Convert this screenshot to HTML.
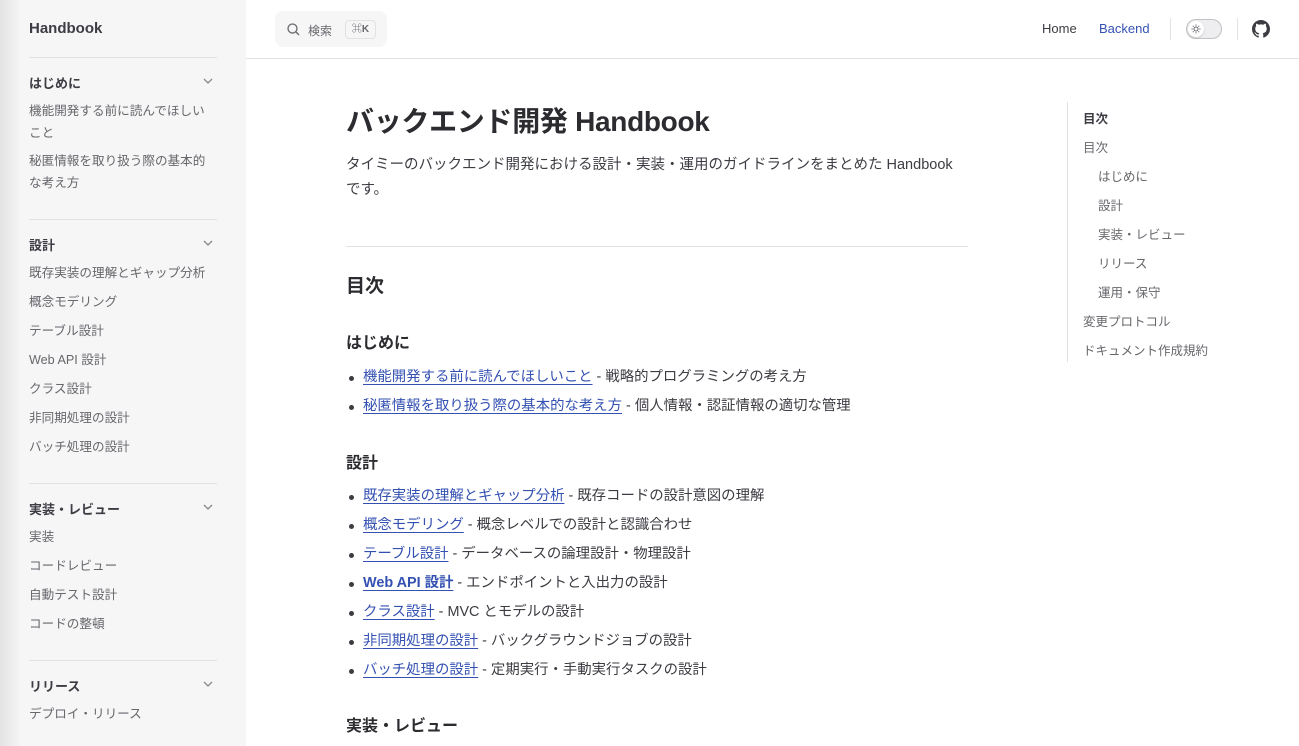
<!DOCTYPE html>
<html><head><meta charset="utf-8"><style>
*{margin:0;padding:0;box-sizing:border-box}
body{width:1299px;height:746px;overflow:hidden;background:#fff;font-family:"Liberation Sans","Noto Sans CJK JP",sans-serif;color:#3c3c43;position:relative}
.side{position:absolute;left:0;top:0;width:246px;height:746px;background:#f6f6f7}
.side:before{content:"";position:absolute;left:0;top:0;width:22px;height:100%;background:linear-gradient(90deg,rgba(0,0,0,.08),rgba(0,0,0,0))}
.logo{position:absolute;left:29px;top:20px;font-size:15px;font-weight:bold;color:#3c3c43}
.sline{position:absolute;left:29px;width:188px;height:1px;background:#e2e2e3}
.sh{position:absolute;left:29px;font-size:13px;font-weight:bold;color:#3c3c43}
.chev{position:absolute;left:202px;width:12px;height:12px}
.si{position:absolute;left:29px;font-size:12.6px;color:#67676c;line-height:22px;width:186px}
.hline{position:absolute;left:246px;right:0;top:58px;height:1px;background:#e2e2e3}
.search{position:absolute;left:275px;top:11px;width:112px;height:36px;background:#f6f6f7;border-radius:8px}
.search span{position:absolute;left:33px;top:11px;font-size:12px;color:#67676c}
.kbd{position:absolute;left:70px;top:9px;width:31px;height:19px;border:1px solid #e2e2e3;border-radius:4px;font-size:10px;color:#67676c;text-align:center;line-height:17px;font-weight:bold}
.nav{position:absolute;top:21px;font-size:13px}
.vsep{position:absolute;top:18px;width:1px;height:22px;background:#e2e2e3}
.main{position:absolute;left:346px;top:0;width:622px}
h1{position:absolute;top:100px;font-size:28px;font-weight:bold;color:#2c2c30;white-space:nowrap;letter-spacing:-.3px}
.p{position:absolute;top:153px;font-size:14.5px;line-height:25px;width:622px}
.hr{position:absolute;top:246px;width:622px;height:1px;background:#e2e2e3}
h2{position:absolute;font-size:19px;font-weight:bold;color:#2c2c30}
h3{position:absolute;font-size:16px;font-weight:bold;color:#2c2c30}
ul{position:absolute;list-style:none;font-size:14.4px;line-height:29px}
li{position:relative;padding-left:17px;white-space:nowrap}
li:before{content:"";position:absolute;left:3px;top:13px;width:5px;height:5px;border-radius:50%;background:#3c3c43}
a{color:#3451b2;text-decoration:underline;text-underline-offset:3px}
.toc{position:absolute;left:1067px;top:102px;border-left:1px solid #e2e2e3;height:260px}
.toc div{position:absolute;white-space:nowrap;font-size:12.5px;color:#67676c}
</style></head><body>
<div class="side">
<div class="logo">Handbook</div>
<div class="sline" style="top:57px"></div>
<div class="sh" style="top:73px">はじめに</div>
<svg class="chev" style="top:75px" viewBox="0 0 12 12"><path d="M2 4l4 4 4-4" fill="none" stroke="#888" stroke-width="1.3"/></svg>
<div class="si" style="top:100px">機能開発する前に読んでほしいこと</div>
<div class="si" style="top:150px">秘匿情報を取り扱う際の基本的な考え方</div>
<div class="sline" style="top:219px"></div>
<div class="sh" style="top:235px">設計</div>
<svg class="chev" style="top:237px" viewBox="0 0 12 12"><path d="M2 4l4 4 4-4" fill="none" stroke="#888" stroke-width="1.3"/></svg>
<div class="si" style="top:262px">既存実装の理解とギャップ分析</div>
<div class="si" style="top:291px">概念モデリング</div>
<div class="si" style="top:320px">テーブル設計</div>
<div class="si" style="top:349px">Web API 設計</div>
<div class="si" style="top:378px">クラス設計</div>
<div class="si" style="top:407px">非同期処理の設計</div>
<div class="si" style="top:436px">バッチ処理の設計</div>
<div class="sline" style="top:483px"></div>
<div class="sh" style="top:499px">実装・レビュー</div>
<svg class="chev" style="top:501px" viewBox="0 0 12 12"><path d="M2 4l4 4 4-4" fill="none" stroke="#888" stroke-width="1.3"/></svg>
<div class="si" style="top:526px">実装</div>
<div class="si" style="top:555px">コードレビュー</div>
<div class="si" style="top:584px">自動テスト設計</div>
<div class="si" style="top:613px">コードの整頓</div>
<div class="sline" style="top:660px"></div>
<div class="sh" style="top:676px">リリース</div>
<svg class="chev" style="top:678px" viewBox="0 0 12 12"><path d="M2 4l4 4 4-4" fill="none" stroke="#888" stroke-width="1.3"/></svg>
<div class="si" style="top:703px">デプロイ・リリース</div>
</div>
<div class="hline"></div>
<div class="search"><svg style="position:absolute;left:12px;top:12px" width="13" height="13" viewBox="0 0 13 13"><circle cx="5.5" cy="5.5" r="4.5" fill="none" stroke="#67676c" stroke-width="1.3"/><path d="M9 9l3 3" stroke="#67676c" stroke-width="1.3"/></svg><span>検索</span><div class="kbd">⌘K</div></div>
<div class="nav" style="left:1042px;color:#3c3c43">Home</div>
<div class="nav" style="left:1099px;color:#3451b2">Backend</div>
<div class="vsep" style="left:1170px"></div>
<div style="position:absolute;left:1186px;top:19px;width:36px;height:20px;border:1px solid #c2c2c4;border-radius:10px;background:#eeeef0"><svg style="position:absolute;left:1px;top:1px;border-radius:50%;background:#fff;box-shadow:0 1px 2px rgba(0,0,0,.15)" width="16" height="16" viewBox="0 0 16 16"><circle cx="8" cy="8" r="2" fill="none" stroke="#67676c" stroke-width="1"/><path d="M8 3.5v1.3M8 11.2v1.3M3.5 8h1.3M11.2 8h1.3M4.8 4.8l.9.9M10.3 10.3l.9.9M4.8 11.2l.9-.9M10.3 5.7l.9-.9" stroke="#67676c" stroke-width="1"/></svg></div>
<div class="vsep" style="left:1237px"></div>
<svg style="position:absolute;left:1252px;top:20px" width="18" height="18" viewBox="0 0 16 16"><path fill="#3c3c43" d="M8 0C3.58 0 0 3.58 0 8c0 3.54 2.290 6.53 5.47 7.59.4.07.55-.17.55-.38v-1.330c-2.23.48-2.7-1.07-2.7-1.07-.36-.92-.89-1.17-.89-1.17-.73-.5.05-.49.05-.49.8.06 1.23.83 1.23.83.71 1.22 1.87.87 2.33.66.07-.52.28-.87.5-1.07-1.78-.2-3.64-.89-3.64-3.95 0-.87.31-1.590.82-2.150-.08-.2-.36-1.020.08-2.120 0 0 .67-.21 2.2.82a7.6 7.6 0 014 0c1.53-1.04 2.2-.82 2.2-.82.44 1.1.16 1.92.08 2.12.51.56.82 1.27.82 2.15 0 3.07-1.87 3.75-3.65 3.95.29.25.54.73.54 1.48v2.2c0 .21.15.46.55.38A8.01 8.01 0 0016 8c0-4.42-3.58-8-8-8z"/></svg>
<div class="main">
<h1>バックエンド開発 Handbook</h1>
<div class="p">タイミーのバックエンド開発における設計・実装・運用のガイドラインをまとめた Handbook です。</div>
<div class="hr"></div>
<h2 style="top:271px">目次</h2>
<h3 style="top:329px">はじめに</h3>
<ul style="top:363px">
<li><a>機能開発する前に読んでほしいこと</a> - 戦略的プログラミングの考え方</li>
<li><a>秘匿情報を取り扱う際の基本的な考え方</a> - 個人情報・認証情報の適切な管理</li>
</ul>
<h3 style="top:449px">設計</h3>
<ul style="top:482px">
<li><a>既存実装の理解とギャップ分析</a> - 既存コードの設計意図の理解</li>
<li><a>概念モデリング</a> - 概念レベルでの設計と認識合わせ</li>
<li><a>テーブル設計</a> - データベースの論理設計・物理設計</li>
<li><a style="font-weight:bold">Web API 設計</a> - エンドポイントと入出力の設計</li>
<li><a>クラス設計</a> - MVC とモデルの設計</li>
<li><a>非同期処理の設計</a> - バックグラウンドジョブの設計</li>
<li><a>バッチ処理の設計</a> - 定期実行・手動実行タスクの設計</li>
</ul>
<h3 style="top:712px">実装・レビュー</h3>
</div>
<div class="toc">
<div style="left:15px;top:6px;font-weight:bold;color:#3c3c43">目次</div>
<div style="left:15px;top:35px">目次</div>
<div style="left:30px;top:64px">はじめに</div>
<div style="left:30px;top:93px">設計</div>
<div style="left:30px;top:122px">実装・レビュー</div>
<div style="left:30px;top:151px">リリース</div>
<div style="left:30px;top:180px">運用・保守</div>
<div style="left:15px;top:209px">変更プロトコル</div>
<div style="left:15px;top:238px">ドキュメント作成規約</div>
</div>
</body></html>
